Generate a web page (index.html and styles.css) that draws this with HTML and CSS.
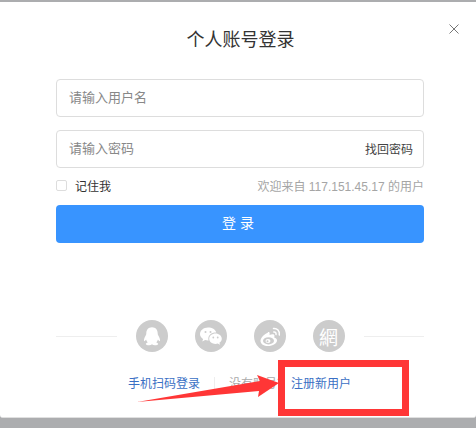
FILE: index.html
```html
<!DOCTYPE html>
<html lang="zh-CN">
<head>
    <meta charset="UTF-8">
    <meta name="viewport" content="width=device-width, initial-scale=1.0">
    <title>个人账号登录</title>
    <link rel="stylesheet" href="styles.css">
</head>
<body>
    <div class="modal">
        <div class="close">
            <svg width="10" height="10" viewBox="0 0 10 10"><path d="M.5.5l9 9M9.500.5l-9 9" stroke="#777" fill="none"/></svg>
        </div>
        <h1 class="title">个人账号登录</h1>
        <div class="form">
            <div class="field"><span class="ph">请输入用户名</span></div>
            <div class="field"><span class="ph">请输入密码</span><a class="forgot">找回密码</a></div>
            <div class="row">
                <label class="remember"><span class="check"></span>记住我</label>
                <span class="welcome">欢迎来自 117.151.45.17 的用户</span>
            </div>
            <button class="submit">登 录</button>
        </div>
        <div class="social">
            <div class="line"></div>
            <div class="icons">
                <span class="icon">
                    <svg width="32" height="32" viewBox="0 0 32 32"><path fill="#fff" transform="translate(.8 .6) scale(.95)" d="M16 7c-4 0-6 3-6 6.500 0 1-.3 1.500-.8 2.500-1.200 2-2 4.500-1.500 5.500.4.500 1.300-.3 2-1.500.3 1.200 1 2.300 1.800 3-1.200.4-2 1-2 1.600 0 1 1.800 1.400 3.500 1.400 1.300 0 2.300-.4 3-1 .7.600 1.700 1 3 1 1.700 0 3.500-.4 3.500-1.400 0-.6-.8-1.200-2-1.600.8-.7 1.500-1.800 1.800-3 .7 1.200 1.600 2 2 1.500.5-1-.3-3.500-1.500-5.500-.5-1-.8-1.500-.8-2.500C22 10 20 7 16 7z"/></svg>
                </span>
                <span class="icon">
                    <svg width="32" height="32" viewBox="0 0 32 32"><path fill="#fff" d="M13 7.500c-4.400 0-8 2.900-8 6.500 0 2.100 1.200 3.800 3.100 5l-.8 2.400 2.800-1.500c.9.300 1.900.5 2.900.5h.6c-.2-.6-.3-1.200-.3-1.800 0-3.500 3.200-6.200 7.300-6.200h.6c-.8-2.900-4-4.900-8.200-4.900z"/><path fill="#fff" d="M20.500 13.500c-3.500 0-6.300 2.300-6.300 5.200s2.800 5.200 6.300 5.200c.8 0 1.500-.1 2.200-.4l2.300 1.300-.6-2c1.500-1 2.400-2.500 2.400-4.100 0-2.900-2.800-5.200-6.300-5.200z"/><circle cx="10.500" cy="12" r="1" fill="#ccc"/><circle cx="15.500" cy="12" r="1" fill="#ccc"/><circle cx="18.300" cy="17.500" r=".9" fill="#ccc"/><circle cx="22.700" cy="17.500" r=".9" fill="#ccc"/></svg>
                </span>
                <span class="icon">
                    <svg width="32" height="32" viewBox="0 0 32 32"><path fill="#fff" d="M14 12.500c-3.500 1.500-7.500 5-7.500 8.500 0 3 3.500 5 7.500 5 5 0 9-2.600 9-5.500 0-1.800-1.500-2.600-2.800-3 .5-1.300.4-2.400-.3-2.900-1-.7-2.700-.3-4.400.4.300-1.400.2-2.500-.3-2.800-.2-.2-.6-.3-1.200-.2z"/><ellipse cx="14.500" cy="20.800" rx="5.500" ry="3.600" fill="#ccc"/><ellipse cx="14" cy="21" rx="2.500" ry="2" fill="#fff"/><circle cx="13.500" cy="21.200" r="1" fill="#ccc"/><path fill="none" stroke="#fff" stroke-width="1.500" stroke-linecap="round" d="M19.500 8.500c3.500-.5 6.500 2.500 5.800 6.500M19.800 12c1.500-.2 2.500 1 2.200 2.500"/></svg>
                </span>
                <span class="icon icon-text">網</span>
            </div>
            <div class="line"></div>
        </div>
        <div class="links">
            <a class="link scan">手机扫码登录</a>
            <span class="sep"></span>
            <span class="no-account">没有账号？</span>
            <a class="link register">注册新用户</a>
        </div>
    </div>

    <!-- red marks drawn over the screenshot -->
    <div class="mark-box"></div>
    <svg class="mark-arrow" width="150" height="40" viewBox="0 0 150 40"><path fill="#ff3636" d="M2 32L125 11 122 5 144 13 123 27 124 21z"/></svg>
</body>
</html>
```

FILE: styles.css
```css
* {
    box-sizing: border-box;
}
html, body {
    height: 100%;
}
body {
    margin: 0;
    padding-top: 2px;
    background-color: #acadaf;
    font-family: "Liberation Sans", "Noto Sans CJK SC", sans-serif;
    overflow: hidden;
}
.modal {
    position: relative;
    height: 416px;
    background-color: #fff;
    border-bottom: 1px solid #e0e0e0;
    border-radius: 0 0 3px 3px;
}
.close {
    position: absolute;
    top: 22px;
    right: 17px;
    line-height: 0;
}
.title {
    margin: 0;
    padding: 26px 0 0 5px;
    height: 77px;
    text-align: center;
    font-size: 18px;
    line-height: 24px;
    font-weight: 400;
    color: #333;
}
.form {
    width: 368px;
    margin-left: 56px;
}
.field {
    display: flex;
    justify-content: space-between;
    align-items: center;
    height: 38px;
    margin-bottom: 13px;
    padding: 0 10px 4px 12px;
    border: 1px solid #ddd;
    border-radius: 4px;
    font-size: 13px;
}
.ph {
    color: #888;
}
.forgot {
    margin-top: 2px;
    font-size: 12px;
    color: #444;
}
.row {
    display: flex;
    justify-content: space-between;
    align-items: center;
    height: 24px;
    margin-top: -8px;
    margin-bottom: 8px;
    font-size: 12px;
}
.remember {
    display: flex;
    align-items: center;
    gap: 8px;
    color: #333;
}
.check {
    width: 11px;
    height: 11px;
    border: 1px solid #ddd;
    border-radius: 2px;
}
.welcome {
    color: #a5a5a5;
}
.submit {
    display: block;
    width: 100%;
    height: 38px;
    padding: 0 4px 4px 0;
    border: 0;
    border-radius: 4px;
    background-color: #3894ff;
    color: #fff;
    font-family: inherit;
    font-size: 14px;
}
.social {
    display: flex;
    align-items: center;
    justify-content: center;
    margin: 77px 52px 0 56px;
}
.line {
    flex: 1;
    height: 1px;
    background-color: #eee;
}
.icons {
    display: flex;
    gap: 27px;
    padding: 0 19px;
}
.icon {
    display: flex;
    align-items: center;
    justify-content: center;
    width: 32px;
    height: 32px;
    border-radius: 50%;
    background-color: #ccc;
}
.icon-text {
    color: #fff;
    font-size: 19px;
    font-family: "Noto Sans CJK TC", sans-serif;
}
.links {
    display: flex;
    align-items: center;
    margin-top: 23px;
    padding-left: 128px;
    font-size: 12px;
    line-height: 18px;
}
.link {
    color: #3a6fc4;
}
.sep {
    width: 1px;
    height: 14px;
    margin: 0 14px;
    background-color: #eee;
}
.no-account {
    color: #aaa;
    width: 62px;
    white-space: nowrap;
}
.mark-box {
    position: absolute;
    left: 278px;
    top: 360px;
    width: 131px;
    height: 56px;
    border: 7px solid #ff3636;
}
.mark-arrow {
    position: absolute;
    left: 135px;
    top: 370px;
}
```
